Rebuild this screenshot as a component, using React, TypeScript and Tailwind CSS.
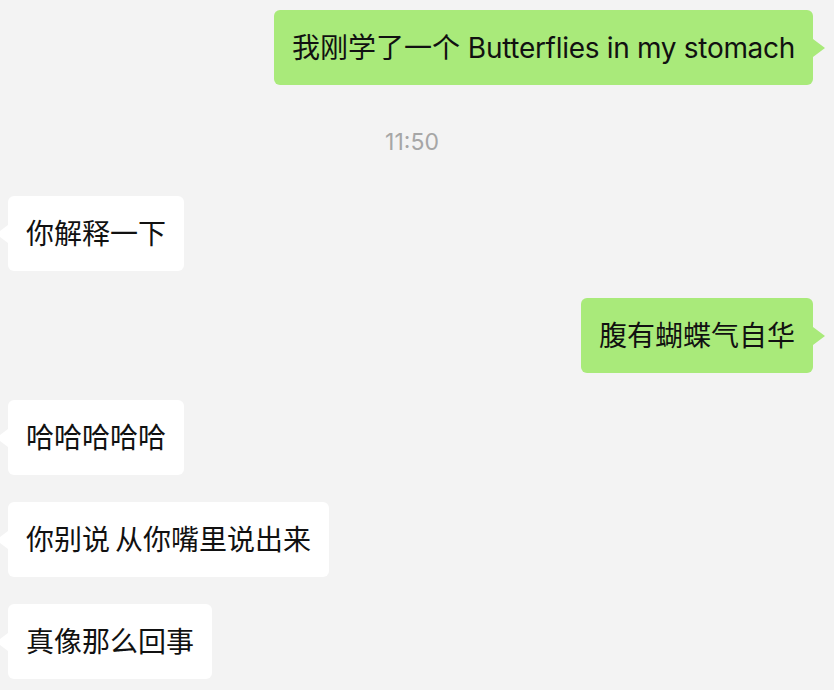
import React from "react";

const font = { fontFamily: '"Inter", "Noto Sans CJK SC", sans-serif' };

function Bubble({ children, mine }: { children: React.ReactNode; mine?: boolean }) {
  return (
    <div className={mine ? "flex justify-end pr-[21px]" : "flex justify-start pl-[8px]"}>
      <div
        className={
          "relative h-[75px] flex items-center px-[18px] rounded-[6px] text-[28px] text-[#111] " +
          (mine ? "bg-[#a9ea7a]" : "bg-white")
        }
      >
        {mine ? (
          <div className="absolute right-[-12px] top-[29px] w-0 h-0 border-y-[9px] border-y-transparent border-l-[12px] border-l-[#a9ea7a]" />
        ) : (
          <div className="absolute left-[-12px] top-[29px] w-0 h-0 border-y-[9px] border-y-transparent border-r-[12px] border-r-white" />
        )}
        <span className="whitespace-pre leading-none">{children}</span>
      </div>
    </div>
  );
}

export default function App() {
  return (
    <div className="w-[834px] h-[690px] bg-[#f3f3f3] overflow-hidden pt-[10px]" style={font}>
      <Bubble mine>
        我刚学了一个 <span className="tracking-[-0.3px]">Butterflies in my stomach</span>
      </Bubble>
      <div className="h-[111px] flex items-center justify-center pt-[4px]">
        <span className="text-[23px] text-[#a6a6a6] ml-[-10px]">11:50</span>
      </div>
      <div className="flex flex-col gap-[27px]">
        <Bubble>你解释一下</Bubble>
        <Bubble mine>腹有蝴蝶气自华</Bubble>
        <Bubble>哈哈哈哈哈</Bubble>
        <Bubble>
          你别说<span className="tracking-[-3px]"> </span>从你嘴里说出来
        </Bubble>
        <Bubble>真像那么回事</Bubble>
      </div>
    </div>
  );
}
